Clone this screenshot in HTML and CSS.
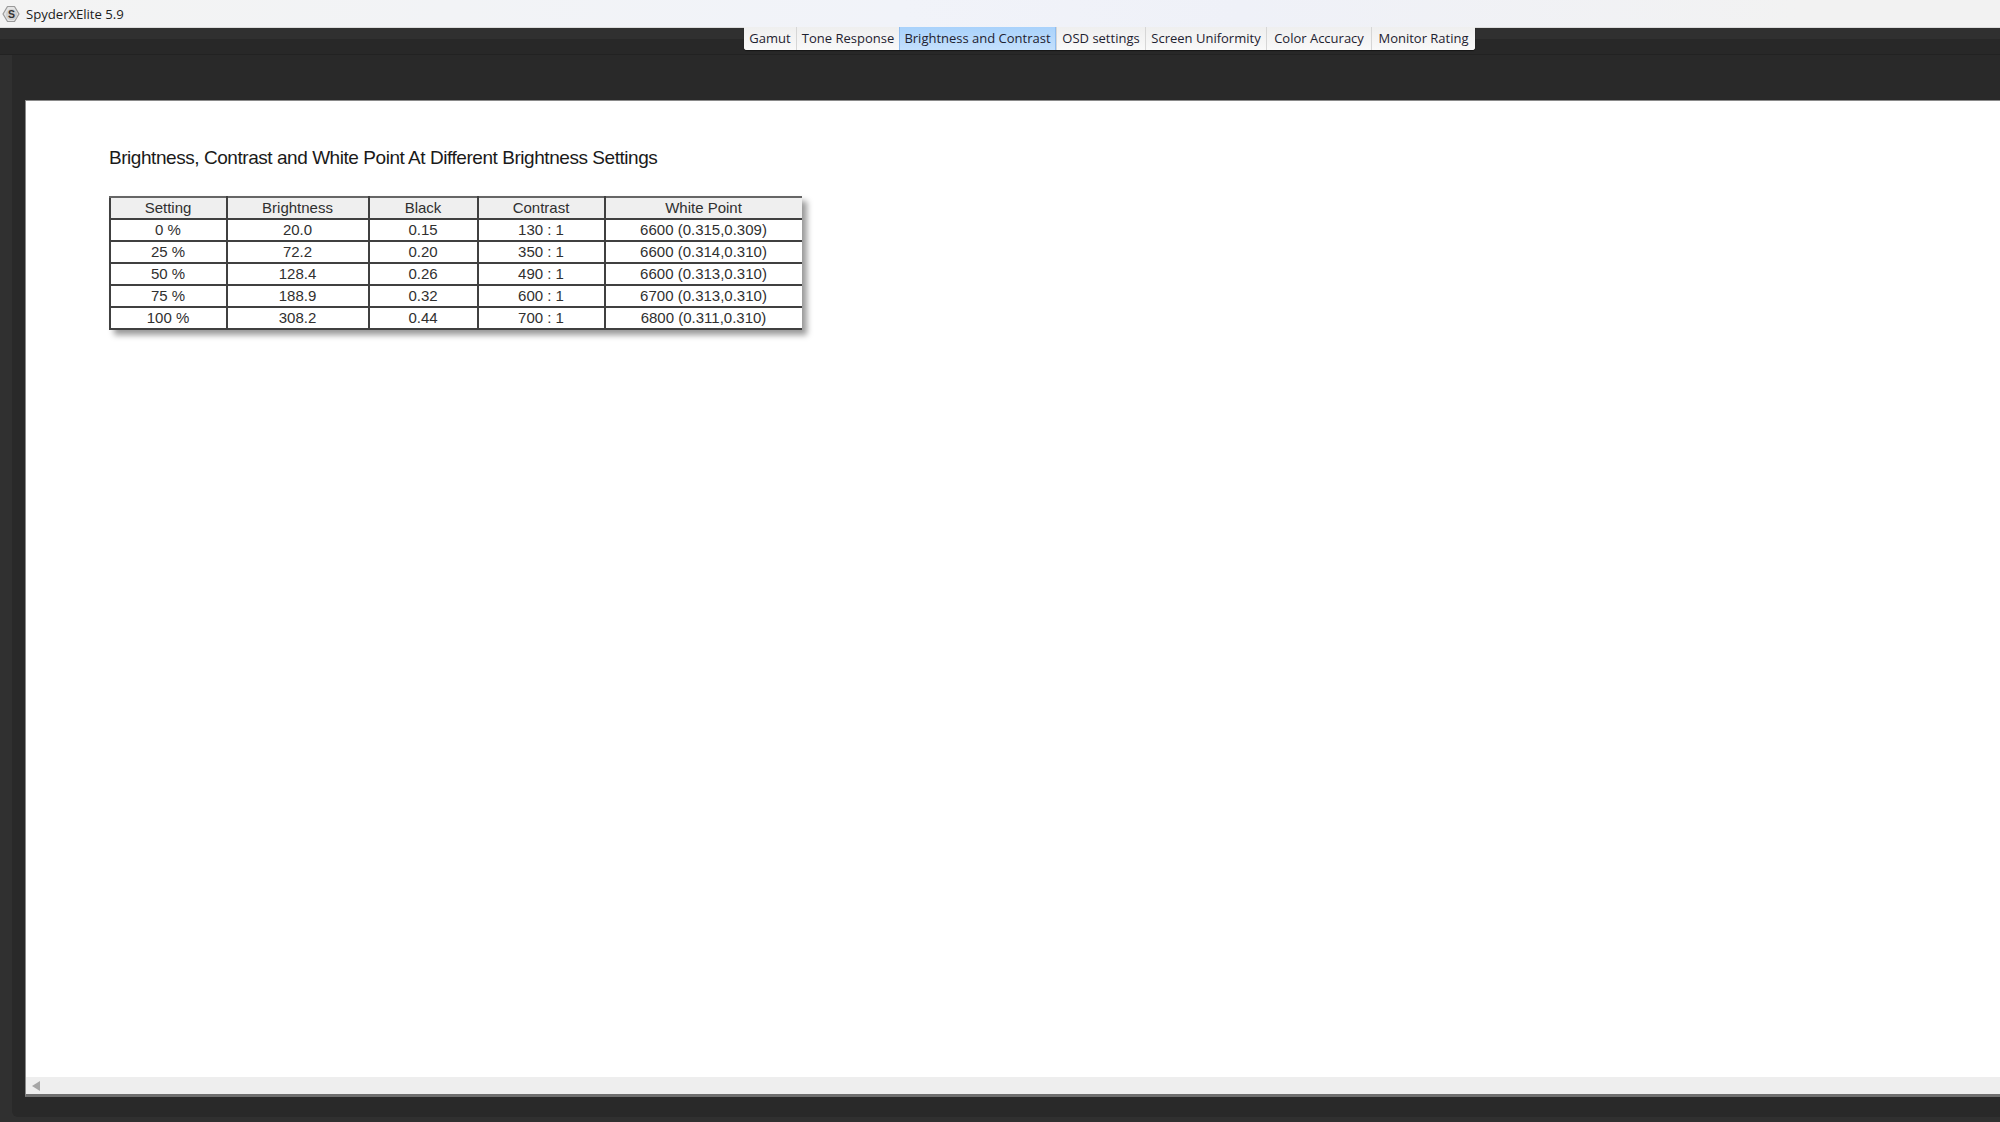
FILE: index.html
```html
<!DOCTYPE html>
<html lang="en">
<head>
  <meta charset="UTF-8" />
  <title>SpyderXElite 5.9</title>
  <link rel="stylesheet" href="styles.css">
</head>
<body>
  <header class="title-bar">
    <svg class="app-icon" width="18" height="18" viewBox="0 0 18 18">
      <path d="M5.5 1.5 H12.5 L17 9 L12.5 16.5 H5.5 L1 9 Z" fill="#e4e4e4" stroke="#9a9a9a" stroke-width="1.2" stroke-linejoin="round"/>
      <circle cx="9.5" cy="9.5" r="5.6" fill="#d0d0d0"/>
      <text x="9.5" y="13.2" class="app-icon-letter" text-anchor="middle">S</text>
    </svg>
    <span class="app-name">SpyderXElite 5.9</span>
  </header>

  <div class="window">
    <nav class="tab-band">
      <div class="tabs">
        <button type="button" class="tab tab-gamut">Gamut</button>
        <button type="button" class="tab tab-tone">Tone Response</button>
        <button type="button" class="tab tab-bright active">Brightness and Contrast</button>
        <button type="button" class="tab tab-osd">OSD settings</button>
        <button type="button" class="tab tab-screen">Screen Uniformity</button>
        <button type="button" class="tab tab-color">Color Accuracy</button>
        <button type="button" class="tab tab-rating">Monitor Rating</button>
      </div>
    </nav>

    <div class="work-area">
      <div class="work-inner">
        <main class="report">
          <div class="report-body">
            <h1>Brightness, Contrast and White Point At Different Brightness Settings</h1>
            <table class="results">
              <colgroup>
                <col class="col-setting"><col class="col-brightness"><col class="col-black"><col class="col-contrast"><col class="col-white">
              </colgroup>
              <thead>
                <tr><th>Setting</th><th>Brightness</th><th>Black</th><th>Contrast</th><th>White Point</th></tr>
              </thead>
              <tbody>
                <tr><td>0 %</td><td>20.0</td><td>0.15</td><td>130 : 1</td><td>6600 (0.315,0.309)</td></tr>
                <tr><td>25 %</td><td>72.2</td><td>0.20</td><td>350 : 1</td><td>6600 (0.314,0.310)</td></tr>
                <tr><td>50 %</td><td>128.4</td><td>0.26</td><td>490 : 1</td><td>6600 (0.313,0.310)</td></tr>
                <tr><td>75 %</td><td>188.9</td><td>0.32</td><td>600 : 1</td><td>6700 (0.313,0.310)</td></tr>
                <tr><td>100 %</td><td>308.2</td><td>0.44</td><td>700 : 1</td><td>6800 (0.311,0.310)</td></tr>
              </tbody>
            </table>
          </div>
          <div class="scrollbar"><span class="arrow-left"></span></div>
        </main>
      </div>
    </div>
  </div>
</body>
</html>
```

FILE: styles.css
```css
/* Reset & Base styles */
* {
  box-sizing: border-box;
  margin: 0;
  padding: 0;
}

html, body {
  height: 1122px;
  overflow: hidden;
}

body {
  font-family: 'Liberation Sans', Arial, sans-serif;
  display: flex;
  flex-direction: column;
  background: #292929;
}

/* Title bar */
.title-bar {
  height: 28px;
  flex: none;
  display: flex;
  align-items: center;
  gap: 6px;
  padding-left: 2px;
  background: linear-gradient(90deg, #f3f3f3 0%, #f1f3f9 45%, #eff1f8 62%, #f2f2f2 90%);
  border-bottom: 1px solid #dcdcdc;
  font-family: 'Open Sans', 'Noto Sans', sans-serif;
  font-size: 13.2px;
  letter-spacing: -0.05px;
  color: #1c1c1c;
}

.app-icon {
  flex: none;
}

.app-icon-letter {
  font-family: 'Liberation Sans', sans-serif;
  font-size: 10.5px;
  font-weight: 700;
  fill: #333;
}

/* Tab band */
.window {
  flex: 1;
  display: flex;
  flex-direction: column;
  min-height: 0;
}

.tab-band {
  height: 27px;
  flex: none;
  display: flex;
  justify-content: center;
  background: linear-gradient(180deg, #303030 0, #303030 11px, #282828 11px, #282828 26px, #222 26px);
}

.tabs {
  display: flex;
  height: 23px;
  margin-left: 219px;
  margin-top: -1px;
  background: #f4f4f4;
  border-radius: 0 0 3px 3px;
  box-shadow: 0 1px 1px rgba(0,0,0,0.5);
}

.tab {
  height: 23px;
  padding-bottom: 2px;
  border: none;
  border-left: 1px solid #d6d6d6;
  background: linear-gradient(180deg, #efefef, #f9f9f9);
  font-family: 'Open Sans', 'Noto Sans', sans-serif;
  font-size: 13px;
  color: #1e2230;
  white-space: nowrap;
}

.tab:first-child {
  border-left: none;
  border-bottom-left-radius: 3px;
}

.tab:last-child {
  border-bottom-right-radius: 3px;
}

.tab-gamut { width: 52px; }
.tab-tone { width: 103px; }
.tab-bright { width: 157px; }
.tab-osd { width: 89px; }
.tab-screen { width: 121px; }
.tab-color { width: 105px; }
.tab-rating { width: 104px; }

.tab.active {
  background: linear-gradient(180deg, #a9d2fb, #c4e0fc);
  border-left: 1px solid #8fbdf0;
  border-right: 1px solid #8fbdf0;
}

/* Work area */
.work-area {
  flex: 1;
  min-height: 0;
  padding: 0 0 5px 12px;
  background: #303030;
}

.work-inner {
  height: 100%;
  padding: 45px 0 20px 13px;
  background: #292929;
  border-radius: 0 0 0 6px;
}

.report {
  height: 100%;
  display: flex;
  flex-direction: column;
  background: #fff;
  border-top: 1px solid #8a8a8a;
  border-left: 1px solid #8a8a8a;
  border-bottom: 3px solid #6f6f6f;
}

.report-body {
  flex: 1;
  padding: 45px 0 0 83px;
}

h1 {
  font-size: 19px;
  font-weight: 400;
  line-height: 24px;
  letter-spacing: -0.45px;
  color: #1a1a1a;
  margin-bottom: 26px;
}

/* Table */
.results {
  width: 692px;
  table-layout: fixed;
  border-collapse: collapse;
  font-size: 15px;
  color: #303030;
  box-shadow: 5px 5px 6px rgba(0,0,0,0.4);
}

.col-setting { width: 117px; }
.col-brightness { width: 142px; }
.col-black { width: 109px; }
.col-contrast { width: 127px; }
.col-white { width: 197px; }

.results th,
.results td {
  height: 22px;
  padding: 0 1px 0 0;
  border: 2px solid #404040;
  text-align: center;
  font-weight: 400;
  line-height: 18px;
}

.results th {
  background: #efefef;
}

.results th:last-child,
.results td:last-child {
  border-right: none;
}

.results thead th {
  border-top: 2px solid #666;
}

/* Scrollbar */
.scrollbar {
  height: 17px;
  flex: none;
  display: flex;
  align-items: center;
  padding-left: 6px;
  background: #eeeeee;
}

.arrow-left {
  width: 0;
  height: 0;
  border-top: 5px solid transparent;
  border-bottom: 5px solid transparent;
  border-right: 8px solid #a6a6a6;
}
```
